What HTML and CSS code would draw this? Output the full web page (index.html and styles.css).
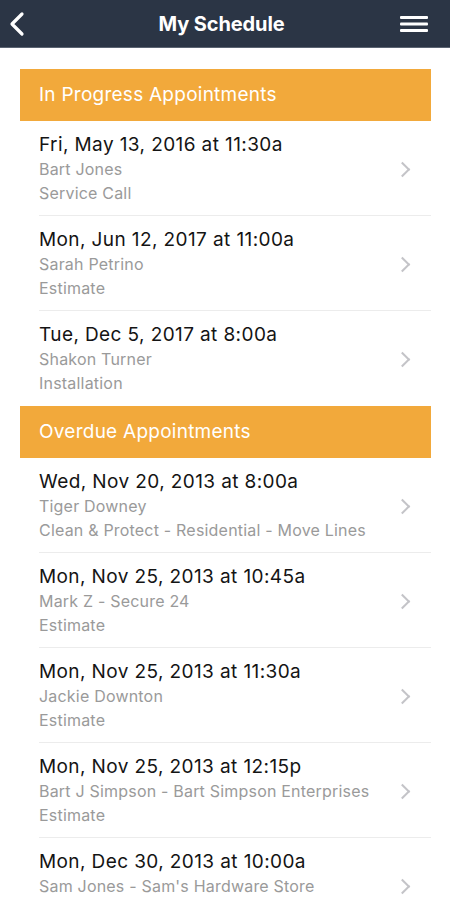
FILE: index.html
```html
<!DOCTYPE html>
<html>

<head>
    <title>My Schedule</title>
    <link rel="stylesheet" href="styles.css">
</head>

<body>
    <div class="topbar">
        <button class="icon-btn back" aria-label="Back">
            <svg width="18" height="26" viewBox="0 0 18 26">
                <path d="M14 3 L4 13 L14 23" fill="none" stroke="#fff" stroke-width="3.2" stroke-linecap="round" stroke-linejoin="round" />
            </svg>
        </button>
        <div class="title">My Schedule</div>
        <button class="icon-btn menu" aria-label="Menu">
            <svg width="28" height="20" viewBox="0 0 28 20">
                <rect x="0" y="2" width="28" height="3" rx="1" fill="#fff" />
                <rect x="0" y="8.5" width="28" height="3" rx="1" fill="#fff" />
                <rect x="0" y="15" width="28" height="3" rx="1" fill="#fff" />
            </svg>
        </button>
    </div>

    <div class="schedule">
        <div class="group">
            <div class="group-title">In Progress Appointments</div>
            <div class="appt">
                <div class="info">
                    <div class="when">Fri, May 13, 2016 at 11:30a</div>
                    <div class="sub">Bart Jones</div>
                    <div class="sub">Service Call</div>
                </div>
                <span class="chev"></span>
            </div>
            <div class="appt">
                <div class="info">
                    <div class="when">Mon, Jun 12, 2017 at 11:00a</div>
                    <div class="sub">Sarah Petrino</div>
                    <div class="sub">Estimate</div>
                </div>
                <span class="chev"></span>
            </div>
            <div class="appt">
                <div class="info">
                    <div class="when">Tue, Dec 5, 2017 at 8:00a</div>
                    <div class="sub">Shakon Turner</div>
                    <div class="sub">Installation</div>
                </div>
                <span class="chev"></span>
            </div>
        </div>

        <div class="group">
            <div class="group-title">Overdue Appointments</div>
            <div class="appt">
                <div class="info">
                    <div class="when">Wed, Nov 20, 2013 at 8:00a</div>
                    <div class="sub">Tiger Downey</div>
                    <div class="sub">Clean &amp; Protect - Residential - Move Lines</div>
                </div>
                <span class="chev"></span>
            </div>
            <div class="appt">
                <div class="info">
                    <div class="when">Mon, Nov 25, 2013 at 10:45a</div>
                    <div class="sub">Mark Z - Secure 24</div>
                    <div class="sub">Estimate</div>
                </div>
                <span class="chev"></span>
            </div>
            <div class="appt">
                <div class="info">
                    <div class="when">Mon, Nov 25, 2013 at 11:30a</div>
                    <div class="sub">Jackie Downton</div>
                    <div class="sub">Estimate</div>
                </div>
                <span class="chev"></span>
            </div>
            <div class="appt">
                <div class="info">
                    <div class="when">Mon, Nov 25, 2013 at 12:15p</div>
                    <div class="sub">Bart J Simpson - Bart Simpson Enterprises</div>
                    <div class="sub">Estimate</div>
                </div>
                <span class="chev"></span>
            </div>
            <div class="appt">
                <div class="info">
                    <div class="when">Mon, Dec 30, 2013 at 10:00a</div>
                    <div class="sub">Sam Jones - Sam's Hardware Store</div>
                    <div class="sub">Estimate</div>
                </div>
                <span class="chev"></span>
            </div>
        </div>
    </div>
</body>

</html>
```

FILE: styles.css
```css
body {
    font-family: Inter, "Liberation Sans", Arial, sans-serif;
    margin: 0;
    padding: 0;
    background-color: #ffffff;
    height: 900px;
    overflow: hidden;
}

.topbar {
    display: grid;
    grid-template-columns: 1fr auto 1fr;
    align-items: center;
    height: 47px;
    padding: 0 22px 0 8px;
    background-color: #2b3545;
    border-bottom: 1px solid #5b6472;
}

.icon-btn {
    background: none;
    border: none;
    padding: 0;
    display: flex;
    cursor: pointer;
}

.menu {
    justify-self: end;
}

.title {
    color: #ffffff;
    font-weight: 700;
    font-size: 20px;
    letter-spacing: -0.1px;
    margin-left: 7px;
}

.schedule {
    padding: 21px 19px 0 20px;
}

.group-title {
    height: 52px;
    line-height: 52px;
    padding-left: 19px;
    background-color: #f2a93b;
    color: #ffffff;
    font-size: 19px;
    letter-spacing: 0.25px;
}

.appt {
    display: flex;
    align-items: center;
    margin-left: 19px;
    height: 95px;
    box-sizing: border-box;
    border-bottom: 1px solid #ececec;
}

.appt:last-child {
    border-bottom: none;
}

.info {
    flex: 1;
    padding-top: 1px;
}

.when {
    color: #141414;
    font-size: 19px;
    letter-spacing: 0.4px;
    line-height: 24px;
}

.sub {
    color: #9a9a9a;
    font-size: 16px;
    letter-spacing: 0.2px;
    line-height: 24px;
}

/* iOS style disclosure arrow */
.chev {
    width: 9px;
    height: 9px;
    border-top: 2px solid #c4c4c8;
    border-right: 2px solid #c4c4c8;
    transform: rotate(45deg);
    margin-right: 23px;
    margin-top: 2px;
}
```
